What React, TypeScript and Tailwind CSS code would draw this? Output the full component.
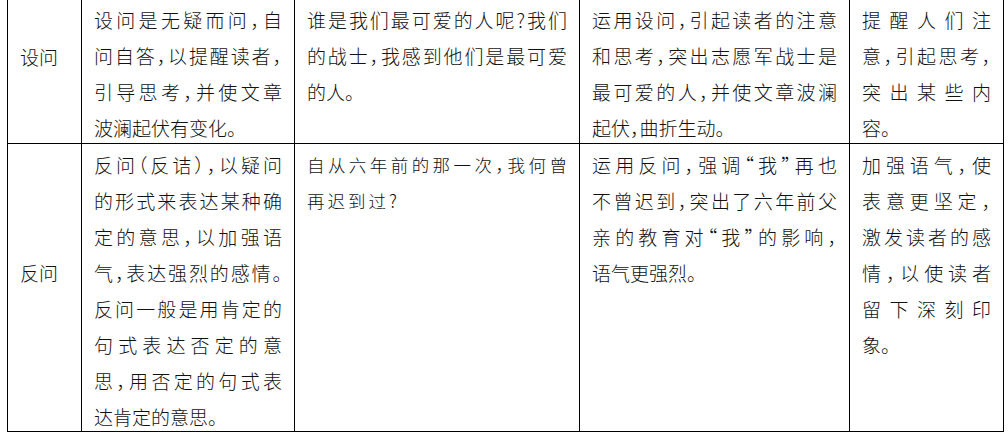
const FONT = "font-['Noto_Sans_CJK_SC','Noto_Sans',sans-serif]";

type Para = { lines: string[]; kai?: boolean };

interface Row {
  label: string;
  height: string;
  pad: string;
  cells: Para[];
}

const rows: Row[] = [
  {
    label: "设问",
    height: "h-[144px]",
    pad: "pt-[2px]",
    cells: [
      { lines: ["设问是无疑而问，自", "问自答，以提醒读者，", "引导思考，并使文章", "波澜起伏有变化。"] },
      { lines: ["谁是我们最可爱的人呢?我们", "的战士，我感到他们是最可爱", "的人。"] },
      { lines: ["运用设问，引起读者的注意", "和思考，突出志愿军战士是", "最可爱的人，并使文章波澜", "起伏，曲折生动。"] },
      { lines: ["提醒人们注", "意，引起思考，", "突出某些内", "容。"] },
    ],
  },
  {
    label: "反问",
    height: "h-[288px]",
    pad: "pt-[3px]",
    cells: [
      {
        lines: [
          "反问（反诘），以疑问",
          "的形式来表达某种确",
          "定的意思，以加强语",
          "气，表达强烈的感情。",
          "反问一般是用肯定的",
          "句式表达否定的意",
          "思，用否定的句式表",
          "达肯定的意思。",
        ],
      },
      { lines: ["自从六年前的那一次，我何曾", "再迟到过?"], kai: true },
      { lines: ["运用反问，强调“我”再也", "不曾迟到，突出了六年前父", "亲的教育对“我”的影响，", "语气更强烈。"] },
      { lines: ["加强语气，使", "表意更坚定，", "激发读者的感", "情，以使读者", "留下深刻印", "象。"] },
    ],
  },
];

// every line but the last of a paragraph is stretched edge to edge
function Lines({ para }: { para: Para }) {
  return (
    <>
      {para.lines.map((line, i) => {
        const last = i === para.lines.length - 1;
        return (
          <div
            key={i}
            className={
              last
                ? `text-left ${para.kai ? "tracking-[3px]" : ""}`
                : "text-justify [text-align-last:justify]"
            }
          >
            {line}
          </div>
        );
      })}
    </>
  );
}

export default function App() {
  return (
    <div className={`w-[1008px] h-[438px] bg-white overflow-hidden ${FONT}`}>
      <div className="ml-[7px] grid grid-cols-[74px_213px_285px_270px_155px] text-[#111] font-light text-[19px] leading-[36px] [font-feature-settings:'halt']">
        {rows.map((row) => (
          <div key={row.label} className="contents">
            <div
              className={`${row.height} border-l border-b border-black flex items-center pl-[12px] pb-[29px]`}
            >
              {row.label}
            </div>
            {row.cells.map((para, i) => (
              <div
                key={i}
                className={`${row.height} ${row.pad} border-l border-b border-black px-[12px] ${
                  i === row.cells.length - 1 ? "border-r" : ""
                } ${para.kai ? "text-[17.5px]" : ""}`}
              >
                <Lines para={para} />
              </div>
            ))}
          </div>
        ))}
      </div>
    </div>
  );
}
